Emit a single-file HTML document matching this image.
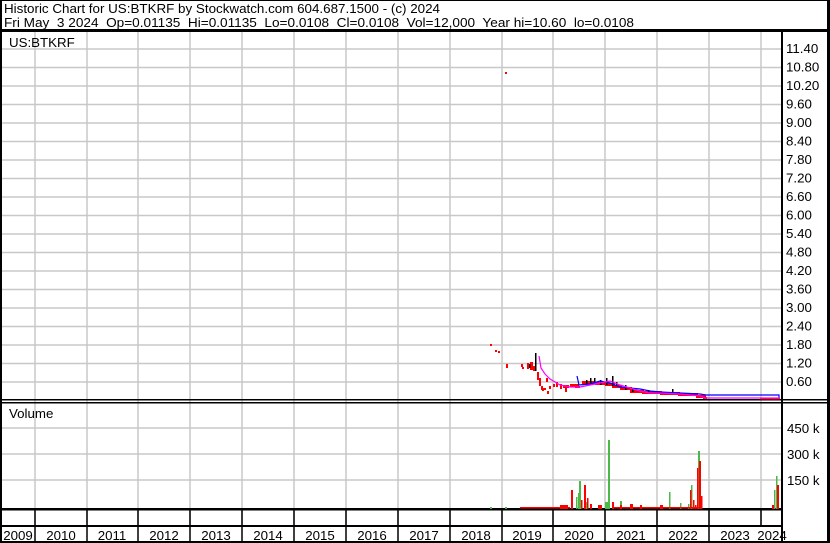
<!DOCTYPE html>
<html><head><meta charset="utf-8"><style>
html,body{margin:0;padding:0;background:#fff;width:830px;height:543px;overflow:hidden}
svg{display:block}
text{font-family:"Liberation Sans",Arial,sans-serif;font-size:13.3px;fill:#000;white-space:pre}
</style></head><body>
<svg width="830" height="543" viewBox="0 0 830 543" xmlns="http://www.w3.org/2000/svg" xml:space="preserve">
<rect x="0" y="0" width="830" height="543" fill="#fff"/>
<text x="4" y="13" textLength="436" lengthAdjust="spacingAndGlyphs">Historic Chart for US:BTKRF by Stockwatch.com 604.687.1500 - (c) 2024</text>
<text x="4" y="27" textLength="630" lengthAdjust="spacingAndGlyphs">Fri May  3 2024  Op=0.01135  Hi=0.01135  Lo=0.0108  Cl=0.0108  Vol=12,000  Year hi=10.60  lo=0.0108</text>
<g stroke="#c8c8c8" stroke-width="1.5">
<path d="M35 32V526M87 32V526M138 32V526M190 32V526M242 32V526M294 32V526M346 32V526M398 32V526M450 32V526M502 32V526M553 32V526M605 32V526M657 32V526M709 32V526M761 32V526"/>
<path d="M2 49H781M2 67.5H781M2 86H781M2 104.5H781M2 123H781M2 141.5H781M2 160H781M2 178.5H781M2 197H781M2 215.5H781M2 234H781M2 252.5H781M2 271H781M2 289.5H781M2 308H781M2 326.5H781M2 345H781M2 363.5H781M2 382H781"/>
<path d="M2 428H781M2 454H781M2 480H781"/>
</g>
<g stroke="#000" stroke-width="1.5">
<path d="M35 510V542M87 510V542M138 510V542M190 510V542M242 510V542M294 510V542M346 510V542M398 510V542M450 510V542M502 510V542M553 510V542M605 510V542M657 510V542M709 510V542M761 510V526"/>
</g>
<g fill="#000">
<rect x="0" y="0" width="830" height="1"/>
<rect x="0" y="0" width="2" height="543"/>
<rect x="827" y="0" width="3" height="543"/>
<rect x="0" y="29" width="830" height="3"/>
<rect x="781" y="29" width="2" height="514"/>
<rect x="0" y="399" width="830" height="1.5"/>
<rect x="0" y="402" width="830" height="1.5"/>
<rect x="0" y="508" width="783" height="2.5"/>
<rect x="0" y="525" width="783" height="2"/>
<rect x="0" y="541" width="830" height="2"/>
</g>
<text x="9" y="47">US:BTKRF</text>
<text x="9" y="418">Volume</text>
<g>
<text x="786" y="53">11.40</text><text x="786" y="71.5">10.80</text><text x="786" y="90">10.20</text><text x="786" y="108.5">9.60</text><text x="786" y="127">9.00</text><text x="786" y="145.5">8.40</text><text x="786" y="164">7.80</text><text x="786" y="182.5">7.20</text><text x="786" y="201">6.60</text><text x="786" y="219.5">6.00</text><text x="786" y="238">5.40</text><text x="786" y="256.5">4.80</text><text x="786" y="275">4.20</text><text x="786" y="293.5">3.60</text><text x="786" y="312">3.00</text><text x="786" y="330.5">2.40</text><text x="786" y="349">1.80</text><text x="786" y="367.5">1.20</text><text x="786" y="386">0.60</text>
<text x="787" y="433">450 k</text><text x="787" y="459">300 k</text><text x="787" y="485">150 k</text>
</g>
<g text-anchor="middle">
<text x="18" y="540">2009</text><text x="61" y="540">2010</text><text x="112" y="540">2011</text><text x="164" y="540">2012</text><text x="216" y="540">2013</text><text x="268" y="540">2014</text><text x="320" y="540">2015</text><text x="372" y="540">2016</text><text x="424" y="540">2017</text><text x="476" y="540">2018</text><text x="527" y="540">2019</text><text x="579" y="540">2020</text><text x="631" y="540">2021</text><text x="683" y="540">2022</text><text x="735" y="540">2023</text><text x="772" y="540">2024</text>
</g>
<g fill="#f00">
<rect x="505" y="72" width="2" height="2"/>
<rect x="490" y="344" width="2" height="2"/><rect x="495" y="350" width="2" height="2"/><rect x="498" y="351" width="2" height="2"/><rect x="506" y="364" width="2" height="4"/>
<rect x="521" y="364" width="2" height="3"/><rect x="522" y="367" width="2" height="2"/>
<rect x="527" y="363" width="2" height="6"/><rect x="530" y="362" width="3" height="8"/><rect x="533" y="366" width="3" height="5"/><rect x="537" y="372" width="2" height="8"/><rect x="539" y="378" width="2" height="8"/>
<rect x="541" y="386" width="2" height="4"/><rect x="542" y="388" width="2" height="3"/><rect x="544" y="388" width="2" height="2"/>
<rect x="546" y="378" width="2" height="4"/><rect x="549" y="386" width="2" height="3"/><rect x="547" y="391" width="2" height="3"/>
<rect x="553" y="384" width="2" height="3"/><rect x="556" y="382" width="2" height="5"/><rect x="560" y="384" width="2" height="5"/>
<rect x="563" y="385" width="6" height="3"/><rect x="565" y="386" width="2" height="6"/><rect x="570" y="384" width="9" height="3"/><rect x="575" y="386" width="5" height="2"/>
<rect x="582" y="381" width="13" height="3"/><rect x="595" y="382" width="11" height="3"/><rect x="605" y="383" width="10" height="3"/><rect x="612" y="385" width="10" height="3"/>
<rect x="620" y="387" width="12" height="3"/><rect x="630" y="390" width="14" height="3"/><rect x="642" y="391" width="20" height="3"/><rect x="660" y="392" width="20" height="3"/><rect x="678" y="393" width="20" height="3"/><rect x="696" y="395" width="10" height="3"/><rect x="703" y="397" width="4" height="2"/>
<rect x="760" y="398" width="20" height="1.5"/>
</g>
<g fill="#000">
<rect x="535" y="353" width="1.5" height="18"/><rect x="529" y="364" width="1.5" height="4"/>
<rect x="586" y="380" width="1.5" height="6"/><rect x="590" y="378" width="1.5" height="6"/><rect x="594" y="378" width="1.5" height="4"/><rect x="600" y="380" width="1.5" height="5"/><rect x="606" y="378" width="1.5" height="7"/><rect x="612" y="376" width="1.5" height="10"/>
<rect x="616" y="382" width="1.5" height="4"/><rect x="625" y="385" width="1.5" height="5"/><rect x="632" y="388" width="1.5" height="4"/><rect x="648" y="390" width="1.5" height="3"/><rect x="672" y="389" width="1.5" height="4"/>
</g>
<polyline fill="none" stroke="#00f" stroke-width="1.2" points="577,376 579,385 590,384 600,381 610,383 620,387 640,389 650,391 660,392 680,393 700,394 706,395 779,395 779,398"/>
<polyline fill="none" stroke="#f0f" stroke-width="1.2" points="539,356 541,368 545,374 550,379 555,382 560,385 570,387 580,387 590,385 600,383 610,381 620,385 630,388 640,391 650,393 660,393 680,394 700,396 705,398 780,398"/>
<g fill="#4cb848">
<rect x="608" y="440" width="2" height="69"/><rect x="579" y="481" width="2" height="28"/><rect x="576" y="497" width="1.5" height="12"/><rect x="578" y="493" width="1.5" height="16"/>
<rect x="669" y="492" width="1.5" height="17"/><rect x="691" y="485" width="1.5" height="24"/><rect x="698" y="451" width="2" height="58"/><rect x="776" y="476" width="1.5" height="33"/><rect x="774" y="490" width="1.5" height="19"/>
<rect x="605" y="502" width="4" height="7"/><rect x="585" y="502" width="2" height="7"/><rect x="620" y="501" width="2" height="8"/><rect x="680" y="503" width="1.5" height="6"/><rect x="688" y="504" width="1.5" height="5"/>
<rect x="490" y="507" width="2" height="2"/><rect x="505" y="507" width="2" height="2"/>
</g>
<g fill="#f00">
<rect x="571" y="490" width="2" height="19"/><rect x="584" y="485" width="2" height="24"/><rect x="581" y="500" width="1.5" height="9"/><rect x="587" y="498" width="1.5" height="11"/>
<rect x="697" y="468" width="1.5" height="41"/><rect x="699" y="461" width="2" height="48"/><rect x="701" y="496" width="1.5" height="13"/><rect x="690" y="490" width="1.5" height="19"/><rect x="693" y="500" width="1.5" height="9"/><rect x="695" y="505" width="1.5" height="4"/>
<rect x="777" y="485" width="2" height="24"/><rect x="772" y="505" width="2" height="4"/>
<rect x="612" y="502" width="2" height="7"/><rect x="620" y="505" width="2" height="4"/><rect x="640" y="505" width="2" height="4"/><rect x="590" y="504" width="2" height="5"/><rect x="598" y="505" width="4" height="4"/>
<rect x="520" y="507" width="50" height="1.5"/><rect x="560" y="505" width="8" height="4"/><rect x="612" y="507" width="90" height="1.5"/><rect x="630" y="504" width="3" height="5"/><rect x="660" y="505" width="3" height="4"/>
</g>
</svg>
</body></html>
